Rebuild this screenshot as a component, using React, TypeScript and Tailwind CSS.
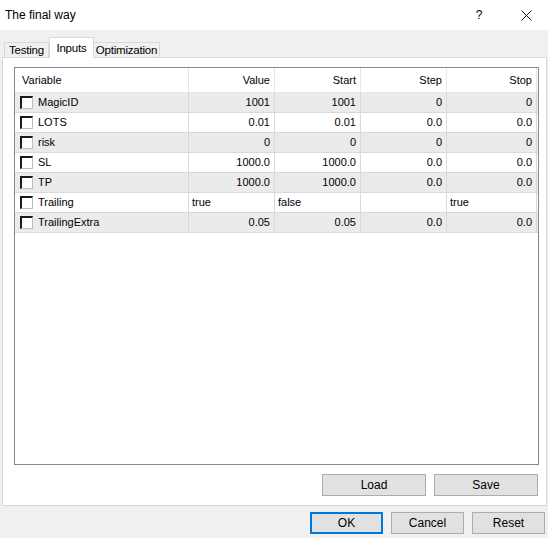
import React from "react";

type Row = {
  name: string;
  value: string;
  start: string;
  step: string;
  stop: string;
  text?: boolean;
};

const rows: Row[] = [
  { name: "MagicID", value: "1001", start: "1001", step: "0", stop: "0" },
  { name: "LOTS", value: "0.01", start: "0.01", step: "0.0", stop: "0.0" },
  { name: "risk", value: "0", start: "0", step: "0", stop: "0" },
  { name: "SL", value: "1000.0", start: "1000.0", step: "0.0", stop: "0.0" },
  { name: "TP", value: "1000.0", start: "1000.0", step: "0.0", stop: "0.0" },
  { name: "Trailing", value: "true", start: "false", step: "", stop: "true", text: true },
  { name: "TrailingExtra", value: "0.05", start: "0.05", step: "0.0", stop: "0.0" },
];

const cols = ["w-[174px]", "w-[86px]", "w-[86px]", "w-[86px]", "w-[90px]"];

const Checkbox = () => (
  <span className="inline-block h-[13px] w-[13px] shrink-0 border-t-2 border-l-2 border-r border-b border-t-[#1a1a1a] border-l-[#1a1a1a] border-r-[#bdbdbd] border-b-[#bdbdbd] bg-white" />
);

const Btn = ({ label, w, primary }: { label: string; w: string; primary?: boolean }) => (
  <button
    className={`${w} h-[22px] bg-[#e1e1e1] text-[12px] text-black ${
      primary ? "border-2 border-[#0078d7]" : "border border-[#adadad]"
    }`}
  >
    {label}
  </button>
);

export default function App() {
  return (
    <div className="flex h-[538px] w-[548px] flex-col bg-[#f0f0f0] font-['Liberation_Sans',Arial,sans-serif] text-black">
      {/* title bar */}
      <div className="flex h-[30px] items-center justify-between bg-white pl-[5px]">
        <span className="text-[12px]">The final way</span>
        <div className="flex items-center">
          <span className="w-[46px] text-center text-[12px]">?</span>
          <span className="flex w-[46px] justify-center pl-[2px]">
            <svg width="11" height="11" viewBox="0 0 11 11" fill="none" stroke="#111" strokeWidth="1">
              <path d="M0.5 0.5 L10.5 10.5 M10.5 0.5 L0.5 10.5" />
            </svg>
          </span>
        </div>
      </div>

      {/* tabs */}
      <div className="mt-[7px] flex h-[20px] items-end pl-[4px] text-[11.5px] tracking-[-0.2px]">
        <div className="flex h-[15px] w-[45px] items-center justify-center border border-b-0 border-[#d9d9d9] bg-[#f0f0f0] pt-[1px]">
          Testing
        </div>
        <div className="relative z-10 -mb-px flex h-[21px] w-[45px] items-start justify-center border border-b-0 border-[#d9d9d9] bg-white pt-[2px]">
          Inputs
        </div>
        <div className="flex h-[15px] w-[66px] items-center justify-center border border-b-0 border-l-0 border-[#d9d9d9] bg-[#f0f0f0] pt-[1px]">
          Optimization
        </div>
      </div>

      {/* panel */}
      <div className="ml-[2px] flex h-[449px] w-[545px] flex-col border border-[#d9d9d9] bg-white pl-[11px] pr-[8px] pt-[9px]">
        <div className="h-[398px] w-[525px] border border-[#828790] bg-white text-[11px]">
          <div className="flex h-[25px] border-b border-[#e5e5e5]">
            {["Variable", "Value", "Start", "Step", "Stop"].map((h, i) => (
              <div
                key={h}
                className={`${cols[i]} flex items-center border-r border-[#e5e5e5] ${
                  i === 0 ? "pl-[7px]" : "justify-end pr-[4px]"
                }`}
              >
                {h}
              </div>
            ))}
          </div>
          {rows.map((r, idx) => {
            const cells = [r.value, r.start, r.step, r.stop];
            return (
              <div
                key={r.name}
                className={`flex h-[20px] border-b border-[#d9d9d9] ${idx % 2 === 0 ? "bg-[#ebebeb]" : "bg-white"}`}
              >
                <div className={`${cols[0]} flex items-center gap-[5px] border-r border-[#d9d9d9] pl-[5px]`}>
                  <Checkbox />
                  <span>{r.name}</span>
                </div>
                {cells.map((c, i) => (
                  <div
                    key={i}
                    className={`${cols[i + 1]} flex items-center border-r border-[#d9d9d9] ${
                      r.text ? "pl-[3px]" : "justify-end pr-[4px]"
                    }`}
                  >
                    {c}
                  </div>
                ))}
              </div>
            );
          })}
        </div>
        <div className="mt-[9px] flex justify-end gap-[8px]">
          <Btn label="Load" w="w-[104px]" />
          <Btn label="Save" w="w-[104px]" />
        </div>
      </div>

      {/* dialog buttons */}
      <div className="mt-[6px] flex justify-end gap-[8px] pr-[3px]">
        <Btn label="OK" w="w-[73px]" primary />
        <Btn label="Cancel" w="w-[73px]" />
        <Btn label="Reset" w="w-[73px]" />
      </div>
    </div>
  );
}
